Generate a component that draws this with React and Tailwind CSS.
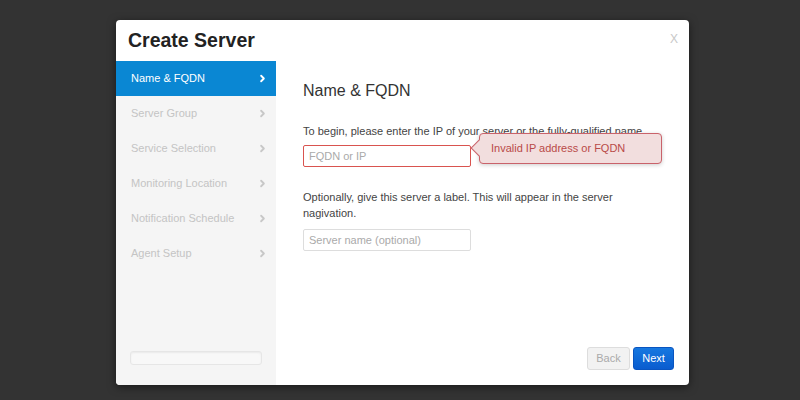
import { ChevronRight } from 'lucide-react';

const steps = [
  'Name & FQDN',
  'Server Group',
  'Service Selection',
  'Monitoring Location',
  'Notification Schedule',
  'Agent Setup',
];

function StepItem({ label, active }) {
  return (
    <div
      className={
        active
          ? 'h-[35px] pl-[15px] pr-[8px] flex items-center justify-between bg-[#0a87d3] text-white'
          : 'h-[35px] pl-[15px] pr-[8px] flex items-center justify-between text-[#c4c4c4]'
      }
    >
      <span className="text-[11px]">{label}</span>
      <ChevronRight size={11} strokeWidth={4} className={active ? 'text-white' : 'text-[#c8c8c8]'} />
    </div>
  );
}

export default function App() {
  return (
    <div
      className="w-full h-[400px] bg-[#333333] flex pl-[116px] pt-[20px]"
      style={{ fontFamily: '"Liberation Sans", Arial, sans-serif' }}
    >
      <div className="w-[573px] h-[365px] bg-white rounded-[4px] flex flex-col overflow-hidden shadow-[0_2px_8px_rgba(0,0,0,0.5)]">
        <header className="h-[41px] relative flex items-center pl-[12px]">
          <h1 className="text-[19.5px] font-bold text-[#222] leading-none">Create Server</h1>
          <span className="absolute right-[11px] top-[10px] text-[12px] text-[#c8c8c8]">X</span>
        </header>

        <div className="flex flex-1 min-h-0">
          <aside className="w-[160px] bg-[#f5f5f5] flex flex-col">
            {steps.map((s, i) => (
              <StepItem key={s} label={s} active={i === 0} />
            ))}
            <div className="mt-auto mx-[14px] mb-[20px] h-[14px] rounded-[3px] border border-[#e6e6e6] bg-[#f8f8f8] shadow-[inset_0_1px_2px_rgba(0,0,0,0.06)]" />
          </aside>

          <main className="flex-1 flex flex-col pl-[27px] pr-[15px] pt-[20px] pb-[15px]">
            <h2 className="text-[16px] leading-[20px] text-[#333]">Name &amp; FQDN</h2>

            <p className="mt-[22px] text-[11px] leading-[16px] text-[#444] whitespace-nowrap">
              To begin, please enter the IP of your server or the fully-qualified name.
            </p>
            <div className="relative mt-[4px]">
              <input
                placeholder="FQDN or IP"
                className="w-[168px] h-[22px] px-[5px] text-[11px] border border-[#d9534f] rounded-[2px] placeholder:text-[#aaa] outline-none"
              />
              <div className="absolute left-[176px] top-[-10px] w-[183px] h-[31px] bg-[#f2dede] border border-[#c9626a] rounded-[4px] flex items-center pl-[11px] text-[11px] text-[#b94a48] shadow-[0_1px_4px_rgba(0,0,0,0.2)]">
                <span className="absolute left-[-7px] top-[8px] w-[12px] h-[12px] bg-[#f2dede] border-l border-b border-[#c9626a] rotate-45" />
                <span className="relative">Invalid IP address or FQDN</span>
              </div>
            </div>

            <p className="mt-[22px] w-[320px] text-[11px] leading-[16px] text-[#444]">
              Optionally, give this server a label. This will appear in the server nagivation.
            </p>
            <input
              placeholder="Server name (optional)"
              className="mt-[8px] w-[168px] h-[22px] px-[5px] text-[11px] border border-[#ddd] rounded-[2px] placeholder:text-[#aaa] outline-none"
            />

            <div className="mt-auto self-end flex gap-[3px]">
              <button className="w-[43px] h-[23px] text-[11px] text-[#aaa] bg-[#f2f2f2] border border-[#ddd] rounded-[3px]">
                Back
              </button>
              <button className="w-[41px] h-[23px] text-[11px] text-white bg-gradient-to-b from-[#1778e0] to-[#0a5ccf] border border-[#0a55c0] rounded-[3px]">
                Next
              </button>
            </div>
          </main>
        </div>
      </div>
    </div>
  );
}
